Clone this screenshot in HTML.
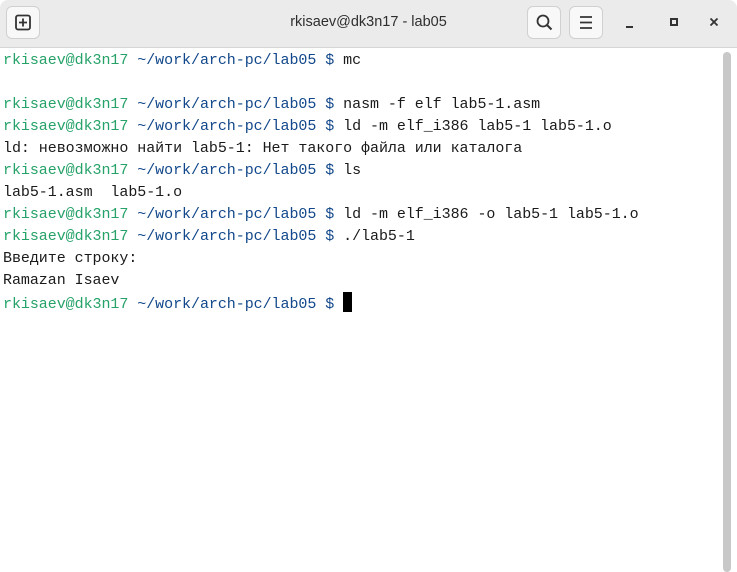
<!DOCTYPE html><html><head><meta charset="utf-8"><style>
body{margin:0;width:737px;height:572px;overflow:hidden;background:#fff;font-family:"Liberation Sans",sans-serif}
.hb{position:absolute;left:0;top:0;width:737px;height:47px;background:#ebebeb;border-bottom:1px solid #d6d6d6;border-radius:8px 8px 0 0}
.t{position:absolute;left:0;right:0;top:14px;text-align:center;font-size:14.5px;color:#2e2e2e}
.btn{position:absolute;top:6px;width:34px;height:33px;background:#f8f8f8;border:1px solid #d0d0d0;border-radius:6px;box-sizing:border-box}
pre{position:absolute;left:3px;top:50px;margin:0;font-family:"Liberation Mono","DejaVu Sans Mono",monospace;font-size:15px;line-height:22px;color:#1a1a1a;letter-spacing:-0.05px}
.g{color:#26a269}.b{color:#12488b}
.cur{display:inline-block;width:9px;height:20px;background:#000;vertical-align:-4px}
.sb{position:absolute;left:723px;top:52px;width:8px;height:520px;background:#c8c8c8;border-radius:4px}
</style></head><body>
<div class="hb">
<div class="btn" style="left:6px"><svg width="32" height="31"><rect x="9" y="8.5" width="14" height="14" rx="2" fill="none" stroke="#333" stroke-width="1.8"/><path d="M16 11.5v8M12 15.5h8" stroke="#333" stroke-width="1.8"/></svg></div>
<div class="t">rkisaev@dk3n17 - lab05</div>
<div class="btn" style="left:527px"><svg width="32" height="31"><circle cx="15" cy="14" r="5.5" fill="none" stroke="#333" stroke-width="1.8"/><path d="M19 18l4.5 4.5" stroke="#333" stroke-width="2"/></svg></div>
<div class="btn" style="left:569px"><svg width="32" height="31"><path d="M10 10h12M10 15.5h12M10 21h12" stroke="#333" stroke-width="1.8"/></svg></div>
<svg style="position:absolute;left:600px;top:0" width="137" height="47"><path d="M26 27h7" stroke="#333" stroke-width="2"/><rect x="71" y="19" width="6" height="6" fill="none" stroke="#333" stroke-width="2"/><path d="M110.5 18.5l7 7M117.5 18.5l-7 7" stroke="#333" stroke-width="1.8"/></svg>
</div>
<pre><span class="g">rkisaev@dk3n17</span> <span class="b">~/work/arch-pc/lab05 $</span> mc

<span class="g">rkisaev@dk3n17</span> <span class="b">~/work/arch-pc/lab05 $</span> nasm -f elf lab5-1.asm
<span class="g">rkisaev@dk3n17</span> <span class="b">~/work/arch-pc/lab05 $</span> ld -m elf_i386 lab5-1 lab5-1.o
ld: невозможно найти lab5-1: Нет такого файла или каталога
<span class="g">rkisaev@dk3n17</span> <span class="b">~/work/arch-pc/lab05 $</span> ls
lab5-1.asm  lab5-1.o
<span class="g">rkisaev@dk3n17</span> <span class="b">~/work/arch-pc/lab05 $</span> ld -m elf_i386 -o lab5-1 lab5-1.o
<span class="g">rkisaev@dk3n17</span> <span class="b">~/work/arch-pc/lab05 $</span> ./lab5-1
Введите строку:
Ramazan Isaev
<span class="g">rkisaev@dk3n17</span> <span class="b">~/work/arch-pc/lab05 $</span> <span class="cur"></span></pre>
<div class="sb"></div>
</body></html>
